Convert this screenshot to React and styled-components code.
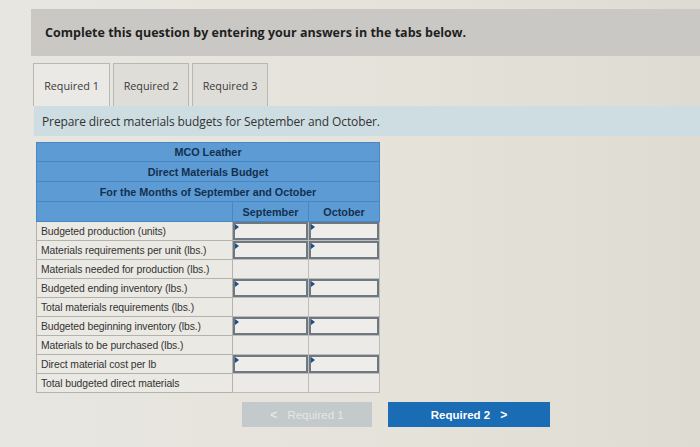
import React from "react";
import styled, { createGlobalStyle } from "styled-components";

const GlobalStyle = createGlobalStyle`
  html, body {
    margin: 0;
    padding: 0;
    background: #e6e3dc;
    font-family: "Liberation Sans", Arial, sans-serif;
  }
`;

const Page = styled.div`
  width: 700px;
  height: 447px;
  overflow: hidden;
  padding: 9px 0 0 31px;
  box-sizing: border-box;
  background: linear-gradient(90deg, #e8e6e1 0%, #e5e2da 60%, #dedbd3 100%);
`;

const HeaderBand = styled.div`
  height: 47px;
  background: #c9c8c4;
  display: flex;
  align-items: center;
  padding-left: 14px;
  font-family: "Open Sans", sans-serif;
  font-weight: 700;
  font-size: 12.5px;
  color: #1f1f1f;
`;

const TabsBar = styled.div`
  display: flex;
  gap: 3px;
  margin-top: 7px;
  padding-left: 2px;
  height: 43px;
`;

const Tab = styled.div`
  width: ${(p) => (p.$active ? 77 : 76)}px;
  box-sizing: border-box;
  border: 1px solid #b9b7b1;
  border-bottom: none;
  background: ${(p) => (p.$active ? "#ebe9e5" : "#dfddd8")};
  display: flex;
  align-items: center;
  justify-content: center;
  font-family: "Open Sans", sans-serif;
  font-size: 10.8px;
  color: #3a3a3a;
`;

const InstructionBand = styled.div`
  height: 30px;
  margin-left: 3px;
  background: #cddde2;
  display: flex;
  align-items: center;
  padding-left: 8px;
  font-family: "Open Sans", sans-serif;
  font-size: 12px;
  letter-spacing: -0.1px;
  color: #333;
`;

const Budget = styled.table`
  margin: 6px 0 0 5px;
  width: 343px;
  border-collapse: collapse;
  table-layout: fixed;
  font-family: "Liberation Sans", Arial, sans-serif;
`;

const TitleCell = styled.td`
  height: ${(p) => p.$h || 18}px;
  padding: 0;
  background: #5d9bd4;
  border: 1px solid #4a86bf;
  text-align: center;
  font-size: 10.8px;
  font-weight: 700;
  color: #13304f;
`;

const ColHead = styled(TitleCell)`
  border-left: 1px solid #3f76aa;
`;

const Label = styled.td`
  height: 18px;
  padding: 0 0 0 4px;
  background: #ebe9e4;
  border: 1px solid #b3b2ad;
  font-size: 10.4px;
  letter-spacing: -0.1px;
  color: #333;
  white-space: nowrap;
  overflow: hidden;
`;

const ValueCell = styled.td`
  height: 18px;
  padding: 0;
  background: #ebeae6;
  border: 1px solid #bdbcb7;
  position: relative;
  ${(p) =>
    p.$input &&
    `
    box-shadow: inset 0 0 0 2px #6d7882;
    background: #eeede9;
  `}
`;

const Marker = styled.span`
  position: absolute;
  left: 2px;
  top: 2px;
  width: 0;
  height: 0;
  border-top: 3px solid transparent;
  border-bottom: 3px solid transparent;
  border-left: 4px solid #1c4f86;
`;

const NavRow = styled.div`
  display: flex;
  align-items: center;
  gap: 16px;
  margin: 9px 0 0 211px;
`;

const NavButton = styled.div`
  height: 25px;
  width: ${(p) => p.$w}px;
  display: flex;
  align-items: center;
  justify-content: center;
  gap: 10px;
  background: ${(p) => (p.$disabled ? "#c4c9cb" : "#1a6cb4")};
  color: ${(p) => (p.$disabled ? "#e3e7e8" : "#ffffff")};
  font-family: "Liberation Sans", Arial, sans-serif;
  font-weight: ${(p) => (p.$disabled ? 400 : 700)};
  font-size: 11.5px;
`;

const Chevron = styled.span`
  font-weight: 700;
  font-size: 12px;
`;

const rows = [
  ["Budgeted production (units)", true],
  ["Materials requirements per unit (lbs.)", true],
  ["Materials needed for production (lbs.)", false],
  ["Budgeted ending inventory (lbs.)", true],
  ["Total materials requirements (lbs.)", false],
  ["Budgeted beginning inventory (lbs.)", true],
  ["Materials to be purchased (lbs.)", false],
  ["Direct material cost per lb", true],
  ["Total budgeted direct materials", false],
];

export default function App() {
  return (
    <>
      <GlobalStyle />
      <Page>
        <HeaderBand>
          Complete this question by entering your answers in the tabs below.
        </HeaderBand>
        <TabsBar>
          <Tab $active>Required 1</Tab>
          <Tab>Required 2</Tab>
          <Tab>Required 3</Tab>
        </TabsBar>
        <InstructionBand>
          Prepare direct materials budgets for September and October.
        </InstructionBand>
        <Budget>
          <colgroup>
            <col style={{ width: 196 }} />
            <col style={{ width: 76 }} />
            <col style={{ width: 71 }} />
          </colgroup>
          <thead>
            <tr>
              <TitleCell colSpan={3}>MCO Leather</TitleCell>
            </tr>
            <tr>
              <TitleCell colSpan={3} $h={19}>
                Direct Materials Budget
              </TitleCell>
            </tr>
            <tr>
              <TitleCell colSpan={3} $h={19}>
                For the Months of September and October
              </TitleCell>
            </tr>
            <tr>
              <TitleCell $h={19} />
              <ColHead $h={19}>September</ColHead>
              <ColHead $h={19}>October</ColHead>
            </tr>
          </thead>
          <tbody>
            {rows.map(([label, input]) => (
              <tr key={label}>
                <Label>{label}</Label>
                <ValueCell $input={input}>{input && <Marker />}</ValueCell>
                <ValueCell $input={input}>{input && <Marker />}</ValueCell>
              </tr>
            ))}
          </tbody>
        </Budget>
        <NavRow>
          <NavButton $disabled $w={130}>
            <Chevron>&lt;</Chevron>
            <span>Required 1</span>
          </NavButton>
          <NavButton $w={162}>
            <span>Required 2</span>
            <Chevron>&gt;</Chevron>
          </NavButton>
        </NavRow>
      </Page>
    </>
  );
}
